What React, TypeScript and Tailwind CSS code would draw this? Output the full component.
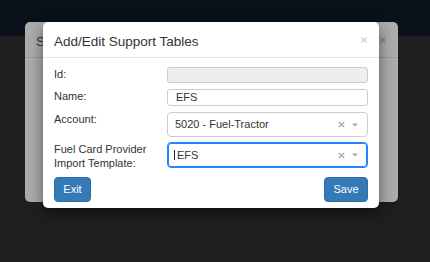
const font = "font-['Liberation_Sans',Arial,sans-serif]";

const ClearIcon = () => (
  <svg width="7" height="7" viewBox="0 0 7 7" className="block">
    <path d="M0.8 0.8L6.2 6.2M6.2 0.8L0.8 6.2" stroke="#9a9a9a" strokeWidth="1.1" />
  </svg>
);

const CaretIcon = () => (
  <svg width="6" height="4" viewBox="0 0 6 4" className="block">
    <path d="M0 0.5H6L3 3.5Z" fill="#a6a6a6" />
  </svg>
);

const Indicators = () => (
  <div className="flex items-center gap-[7px] pr-[9px]">
    <ClearIcon />
    <CaretIcon />
  </div>
);

const Label = ({ children }: { children: React.ReactNode }) => (
  <div className="text-[11px] leading-[14px] text-[#333]">{children}</div>
);

export default function App() {
  return (
    <div className={`relative w-[430px] h-[262px] overflow-hidden bg-[#1f1f1f] ${font}`}>
      <div className="h-[36px] bg-[#0a111a]" />

      {/* dimmed modal underneath, mostly hidden */}
      <div className="absolute left-[25px] top-[22px] w-[373px] h-[180px] rounded-[5px] bg-[#adadad]">
        <div className="h-[36px] border-b border-[#999] flex justify-between items-start pl-[11px] pr-[12px] pt-[10px]">
          <span className="text-[13.5px] leading-[20px] text-[#3a3a3a]">S</span>
          <svg width="6" height="6" viewBox="0 0 6 6" className="mt-[5px]">
            <path d="M0.5 0.5L5.5 5.5M5.5 0.5L0.5 5.5" stroke="#858585" strokeWidth="1.1" />
          </svg>
        </div>
      </div>

      {/* active modal */}
      <div className="absolute left-[43px] top-[22px] w-[336px] h-[186px] rounded-[5px] bg-white shadow-[0_5px_15px_rgba(0,0,0,0.5)]">
        <div className="h-[36px] border-b border-[#e5e5e5] flex justify-between items-start pl-[11px] pr-[12px] pt-[10px]">
          <h4 className="text-[13.5px] leading-[20px] text-[#333]">Add/Edit Support Tables</h4>
          <svg width="6" height="6" viewBox="0 0 6 6" className="mt-[5px]">
            <path d="M0.5 0.5L5.5 5.5M5.5 0.5L0.5 5.5" stroke="#cfcfcf" strokeWidth="1.1" />
          </svg>
        </div>

        <div className="px-[11px] pt-[9px] pb-[8px] flex flex-col">
          <div className="grid grid-cols-[113px_201px]">
            <Label>Id:</Label>
            <div className="h-[16px] rounded-[3px] border border-[#ccc] bg-[#eee]" />
          </div>

          <div className="grid grid-cols-[113px_201px] mt-[6px]">
            <Label>Name:</Label>
            <div className="h-[17px] rounded-[3px] border border-[#ccc] bg-white flex items-center pl-[8px] text-[11px] text-[#333]">
              EFS
            </div>
          </div>

          <div className="grid grid-cols-[113px_201px] mt-[6px]">
            <Label>Account:</Label>
            <div className="h-[25px] rounded-[4px] border border-[#ccc] bg-white flex items-center justify-between">
              <span className="pl-[7px] text-[11px] text-[#333]">5020 - Fuel-Tractor</span>
              <Indicators />
            </div>
          </div>

          <div className="grid grid-cols-[113px_201px] mt-[5px]">
            <Label>
              Fuel Card Provider
              <br />
              Import Template:
            </Label>
            <div className="h-[26px] rounded-[4px] border border-[#2684ff] shadow-[inset_0_0_0_1px_#2684ff] bg-white flex items-center justify-between">
              <div className="flex items-center pl-[6px]">
                <span className="w-px h-[10px] bg-[#222] mr-[2px]" />
                <span className="text-[11px] text-[#333]">EFS</span>
              </div>
              <Indicators />
            </div>
          </div>

          <div className="flex justify-between mt-[7px]">
            <button className="w-[37px] h-[25px] rounded-[4px] border border-[#2e6da4] bg-[#337ab7] text-white text-[11px]">
              Exit
            </button>
            <button className="w-[44px] h-[25px] rounded-[4px] border border-[#2e6da4] bg-[#337ab7] text-white text-[11px]">
              Save
            </button>
          </div>
        </div>
      </div>
    </div>
  );
}
